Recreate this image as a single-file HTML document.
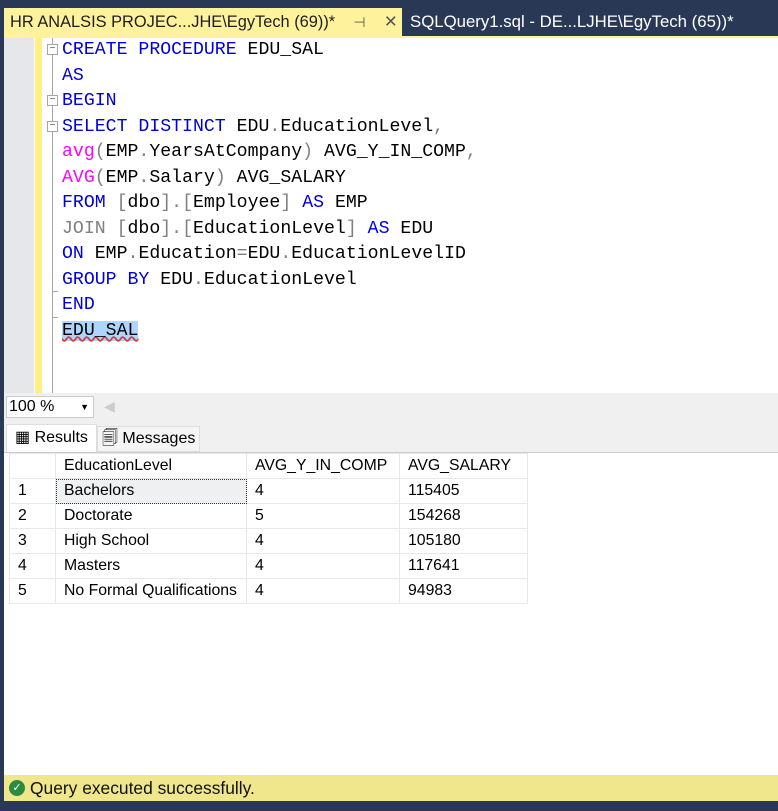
<!DOCTYPE html>
<html><head><style>
*{margin:0;padding:0;box-sizing:border-box}
body{width:778px;height:811px;background:#293955;position:relative;overflow:hidden;font-family:"Liberation Sans",sans-serif}
.abs{position:absolute}
.tab1{left:4px;top:8px;width:398px;height:28px;background:#fff29d;color:#1e1e1e;font-size:16.4px;line-height:28px;padding-left:6px;white-space:nowrap}
.tab2{left:402px;top:8px;width:376px;height:28px;color:#fff;font-size:16.8px;line-height:28px;padding-left:8px;white-space:nowrap}
.ed{left:4px;top:36px;width:774px;height:357px;background:#fff;border-top:2px solid #fff29d}
.code{position:absolute;left:58px;top:0;font-family:"Liberation Mono","DejaVu Sans Mono",monospace;font-size:18.2px;line-height:25.5px;color:#000;white-space:pre}
.k{color:#0000dd}.g{color:#808080}.f{color:#ff00ff}
.sel{background:#add6ff;text-decoration:underline wavy #d04040}
.gridtbl{border-collapse:collapse;font-size:15.8px;color:#000}
.gridtbl td{border:1px solid #e8e8e8;height:25px;padding:0 8px;white-space:nowrap}
</style></head><body>
<div class="abs tab1">HR ANALSIS PROJEC...JHE\EgyTech (69))*&nbsp;&nbsp;&nbsp;&nbsp;<span style="color:#555;font-size:14px">⊣</span>&nbsp;&nbsp;&nbsp;&nbsp;<span style="color:#555">✕</span></div>
<div class="abs tab2">SQLQuery1.sql - DE...LJHE\EgyTech (65))*</div>
<div class="abs ed">
 <div class="abs" style="left:0;top:0;width:30px;height:357px;background:#e6e7e8"></div>
 <div class="abs" style="left:31px;top:0;width:7px;height:355px;background:#fef083"></div>
 <div class="abs" style="left:48px;top:0;width:1px;height:355px;background:#a5a5a5"></div>
 <div class="abs" style="left:43px;top:6px;width:11px;height:11px;border:1px solid #a5a5a5;background:#fff;font-size:10px;line-height:8px;text-align:center;color:#555">−</div>
 <div class="abs" style="left:43px;top:57px;width:11px;height:11px;border:1px solid #a5a5a5;background:#fff;font-size:10px;line-height:8px;text-align:center;color:#555">−</div>
 <div class="abs" style="left:43px;top:83px;width:11px;height:11px;border:1px solid #a5a5a5;background:#fff;font-size:10px;line-height:8px;text-align:center;color:#555">−</div>
 <div class="abs" style="left:48px;top:253px;width:6px;height:1px;background:#a5a5a5"></div>
 <div class="abs" style="left:48px;top:279px;width:6px;height:1px;background:#a5a5a5"></div>
 <div class="code"><span class="k">CREATE PROCEDURE</span> EDU_SAL
<span class="k">AS</span>
<span class="k">BEGIN</span>
<span class="k">SELECT DISTINCT</span> EDU<span class="g">.</span>EducationLevel<span class="g">,</span>
<span class="f">avg</span><span class="g">(</span>EMP<span class="g">.</span>YearsAtCompany<span class="g">)</span> AVG_Y_IN_COMP<span class="g">,</span>
<span class="f">AVG</span><span class="g">(</span>EMP<span class="g">.</span>Salary<span class="g">)</span> AVG_SALARY
<span class="k">FROM</span> <span class="g">[</span>dbo<span class="g">].[</span>Employee<span class="g">]</span> <span class="k">AS</span> EMP
<span class="g">JOIN</span> <span class="g">[</span>dbo<span class="g">].[</span>EducationLevel<span class="g">]</span> <span class="k">AS</span> EDU
<span class="k">ON</span> EMP<span class="g">.</span>Education<span class="g">=</span>EDU<span class="g">.</span>EducationLevelID
<span class="k">GROUP BY</span> EDU<span class="g">.</span>EducationLevel
<span class="k">END</span>
<span class="sel">EDU_SAL</span></div>
</div>
<div class="abs" style="left:4px;top:393px;width:774px;height:27px;background:#f0f0f0"></div>
<div class="abs" style="left:6px;top:396px;width:88px;height:22px;background:#fff;border:1px solid #ccc;font-size:16px;line-height:20px;padding-left:2px">100 %<span style="position:absolute;right:4px;top:0;font-size:9px">▼</span></div>
<div class="abs" style="left:104px;top:398px;color:#ccc;font-size:14px">◀</div>
<div class="abs" style="left:4px;top:420px;width:774px;height:32px;background:#f0f0f0"></div>
<div class="abs" style="left:6px;top:424px;width:91px;height:28px;background:#fff;border:1px solid #ddd;border-bottom:none;font-size:16px;line-height:26px;padding-left:8px">▦ Results</div>
<div class="abs" style="left:97px;top:426px;width:103px;height:26px;background:#f5f5f5;border:1px solid #ddd;font-size:16px;line-height:24px;padding-left:4px">🗐 Messages</div>
<div class="abs" style="left:4px;top:452px;width:774px;height:323px;background:#fff;border-top:1px solid #ccc"></div>
<table class="gridtbl abs" style="left:9px;top:453px">
<tr><td style="width:46px"></td><td style="width:191px">EducationLevel</td><td style="width:153px">AVG_Y_IN_COMP</td><td style="width:128px">AVG_SALARY</td></tr>
<tr><td>1</td><td style="background:#eef0f2;outline:1px dotted #333;outline-offset:-1px">Bachelors</td><td>4</td><td>115405</td></tr>
<tr><td>2</td><td>Doctorate</td><td>5</td><td>154268</td></tr>
<tr><td>3</td><td>High School</td><td>4</td><td>105180</td></tr>
<tr><td>4</td><td>Masters</td><td>4</td><td>117641</td></tr>
<tr><td>5</td><td>No Formal Qualifications</td><td>4</td><td>94983</td></tr>
</table>
<div class="abs" style="left:4px;top:775px;width:774px;height:26px;background:#f0e68c;font-size:17.4px;line-height:26px;padding-left:26px;color:#111">Query executed successfully.</div>
<div class="abs" style="left:9px;top:780px;width:16px;height:16px;border-radius:50%;background:#2e8b3e;color:#fff;font-size:11px;line-height:16px;text-align:center">✓</div>
</body></html>
